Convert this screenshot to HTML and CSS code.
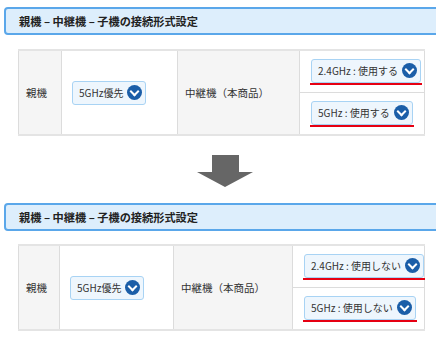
FILE: index.html
```html
<!DOCTYPE html>
<html lang="ja">
<head>
  <meta charset="UTF-8">
  <title>接続形式設定</title>
  <link rel="stylesheet" href="styles.css">
</head>
<body>
  <div class="section-title">親機 – 中継機 – 子機の接続形式設定</div>
  <table class="setting before">
    <colgroup>
      <col class="c1"><col class="c2"><col class="c3"><col class="c4">
    </colgroup>
    <tr>
      <th rowspan="2">親機</th>
      <td rowspan="2"><span class="select">5GHz優先<i class="chev"></i></span></td>
      <th rowspan="2">中継機（本商品）</th>
      <td class="band"><span class="mark"><span class="select">2.4GHz : 使用する<i class="chev"></i></span></span></td>
    </tr>
    <tr>
      <td class="band"><span class="mark"><span class="select">5GHz : 使用する<i class="chev"></i></span></span></td>
    </tr>
  </table>

  <div class="arrow">
    <svg width="56" height="32" viewBox="0 0 56 32">
      <polygon points="15,0 42,0 42,17 56,17 28,32 0,17 15,17" fill="#666"/>
    </svg>
  </div>

  <div class="section-title">親機 – 中継機 – 子機の接続形式設定</div>
  <table class="setting after">
    <colgroup>
      <col class="c1"><col class="c2"><col class="c3"><col class="c4">
    </colgroup>
    <tr>
      <th rowspan="2">親機</th>
      <td rowspan="2"><span class="select">5GHz優先<i class="chev"></i></span></td>
      <th rowspan="2">中継機（本商品）</th>
      <td class="band"><span class="mark"><span class="select">2.4GHz : 使用しない<i class="chev"></i></span></span></td>
    </tr>
    <tr>
      <td class="band"><span class="mark"><span class="select">5GHz : 使用しない<i class="chev"></i></span></span></td>
    </tr>
  </table>
</body>
</html>
```

FILE: styles.css
```css
body {
  margin: 0;
  padding-top: 7px;
  font-family: "Noto Sans CJK JP", "Noto Sans", sans-serif;
  color: #333;
  background: #fff;
  overflow: hidden;
}

.section-title {
  margin-left: 4px;
  margin-right: -12px;
  height: 24px;
  line-height: 24px;
  padding-left: 13px;
  background: #ddeefc;
  border: 2px solid #5aa7ea;
  border-radius: 4px;
  font-size: 11.2px;
  font-weight: bold;
  color: #222;
}

.setting {
  margin: 14px 0 0 18px;
  width: 407px;
  table-layout: fixed;
  border-collapse: collapse;
  border-top: 2px solid #e4e4e4;
  border-bottom: 2px solid #e4e4e4;
  font-size: 10.5px;
}

.setting th,
.setting td {
  border: 1px solid #dcdcdc;
  padding: 0 10px;
  text-align: left;
  font-weight: normal;
  white-space: nowrap;
}

.setting th {
  background: #f5f5f5;
  padding-left: 7px;
}

.setting td.band {
  height: 41px;
}

.before .c1 { width: 43px; }
.before .c2 { width: 116px; }
.before .c3 { width: 122px; }

.after {
  margin-top: 13px;
}

.after .c1 { width: 41px; }
.after .c2 { width: 114px; }
.after .c3 { width: 119px; }

.select {
  display: inline-flex;
  align-items: center;
  height: 22px;
  padding: 0 3px 0 6px;
  background: #eef6fd;
  border: 1px solid #a8d3f4;
  border-radius: 3px;
  font-size: 10px;
  color: #333;
  white-space: pre;
  vertical-align: middle;
}

.chev {
  position: relative;
  display: inline-block;
  width: 15px;
  height: 15px;
  margin-left: 4px;
  border-radius: 50%;
  background: #1b5ea8;
}

.chev::after {
  content: "";
  position: absolute;
  left: 4px;
  top: 3px;
  width: 5px;
  height: 5px;
  border-right: 2px solid #fff;
  border-bottom: 2px solid #fff;
  transform: rotate(45deg);
}

.mark {
  display: inline-flex;
  padding: 0 1px;
  border-bottom: 2px solid #e60012;
  vertical-align: middle;
}

.arrow {
  padding: 19px 0 16px 197px;
  line-height: 0;
}
```
